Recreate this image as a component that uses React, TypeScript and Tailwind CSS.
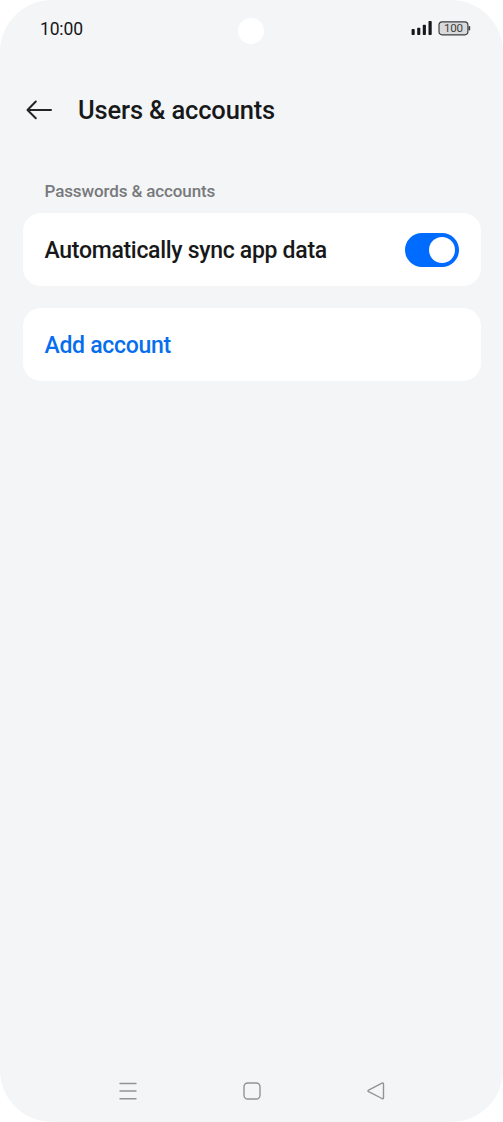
import { useState } from "react";

function StatusBar() {
  return (
    <div className="flex h-[58px] shrink-0 items-start justify-between pl-10 pr-8">
      <span className="w-[198px] shrink-0 pt-[18px] text-[17.5px] leading-[22px] tracking-[-0.15px]">10:00</span>
      <span className="mt-[18px] h-[26px] w-[26px] shrink-0 rounded-full bg-white" />
      <div className="flex w-[207px] shrink-0 justify-end pt-5">
        <svg width="60" height="16" viewBox="0 0 60 16" fill="none">
          <g fill="#16181a">
            <rect x="0.6" y="9" width="3.1" height="6" rx="0.8" />
            <rect x="6.2" y="7.7" width="3.1" height="7.3" rx="0.8" />
            <rect x="11.8" y="4.7" width="3.1" height="10.3" rx="0.8" />
            <rect x="17.5" y="1" width="3.2" height="14" rx="0.8" />
          </g>
          <rect x="28" y="1.8" width="28.9" height="13" rx="3.2" fill="#d9dadb" stroke="#3c3e40" strokeWidth="1.2" />
          <rect x="57.5" y="6" width="1.7" height="4.5" rx="0.8" fill="#3c3e40" />
          <text x="42.5" y="12.4" textAnchor="middle" fontSize="11.6" textLength="19" fill="#3c3e40">100</text>
        </svg>
      </div>
    </div>
  );
}

export default function App() {
  const [sync, setSync] = useState(true);
  return (
    <div className="flex h-[1122px] w-[503px] flex-col overflow-hidden rounded-[52px] bg-[#f3f5f7] font-['Roboto',sans-serif] text-[#17181a]">
      <StatusBar />
      <header className="flex h-[104px] shrink-0 items-center pl-[26px]">
        <button aria-label="Back" className="mr-[26px]">
          <svg width="26" height="20" viewBox="0 0 26 20" fill="none" stroke="#222426" strokeWidth="2" strokeLinecap="round" strokeLinejoin="round">
            <path d="M25 10H1.5M9.8 1.5 1.5 10l8.3 8.3" />
          </svg>
        </button>
        <h1 className="text-[25.5px] font-medium leading-8 tracking-[-0.15px]">Users &amp; accounts</h1>
      </header>
      <main className="flex flex-1 flex-col px-[22.5px]">
        <h2 className="mb-[11px] mt-[18px] pl-[22px] text-[17px] font-medium leading-[22px] tracking-[-0.12px] text-[#78797b]">Passwords &amp; accounts</h2>
        <div className="flex h-[73px] items-center justify-between rounded-[18px] bg-white pl-[22px] pr-[22px]">
          <span className="pt-0.5 text-[23px] font-medium leading-8 tracking-[-0.3px]">Automatically sync app data</span>
          <button
            role="switch"
            aria-checked={sync}
            aria-label="Automatically sync app data"
            onClick={() => setSync(!sync)}
            className={`flex h-[34px] w-[53.5px] items-center rounded-full px-1 ${sync ? "justify-end bg-[#006bff]" : "justify-start bg-gray-300"}`}
          >
            <span className="size-[26px] rounded-full bg-white" />
          </button>
        </div>
        <button className="mt-[22px] flex h-[73px] items-center rounded-[18px] bg-white pl-[22px] pt-0.5 text-[23px] font-medium leading-8 tracking-[-0.3px] text-[#066eee]">
          Add account
        </button>
      </main>
      <nav className="flex h-[62px] shrink-0 items-center justify-between pl-[118px] pr-[117px]">
        <svg width="20" height="20" viewBox="0 0 20 20" stroke="#929394" strokeWidth="1.4" strokeLinecap="round">
          <path d="M2 2.5h16M2 10h16M2 17.7h16" />
        </svg>
        <svg width="20" height="20" viewBox="0 0 20 20" fill="none" stroke="#929394" strokeWidth="1.4">
          <rect x="2" y="2" width="16" height="16" rx="3.8" />
        </svg>
        <svg width="20" height="20" viewBox="0 0 20 20" fill="none" stroke="#929394" strokeWidth="1.4" strokeLinejoin="round">
          <path d="M2.6 9.1 16 2.2Q17.5 1.6 17.5 3.2V16.6Q17.5 18.2 16 17.5L2.6 10.7Q1.3 9.9 2.6 9.1Z" />
        </svg>
      </nav>
    </div>
  );
}
